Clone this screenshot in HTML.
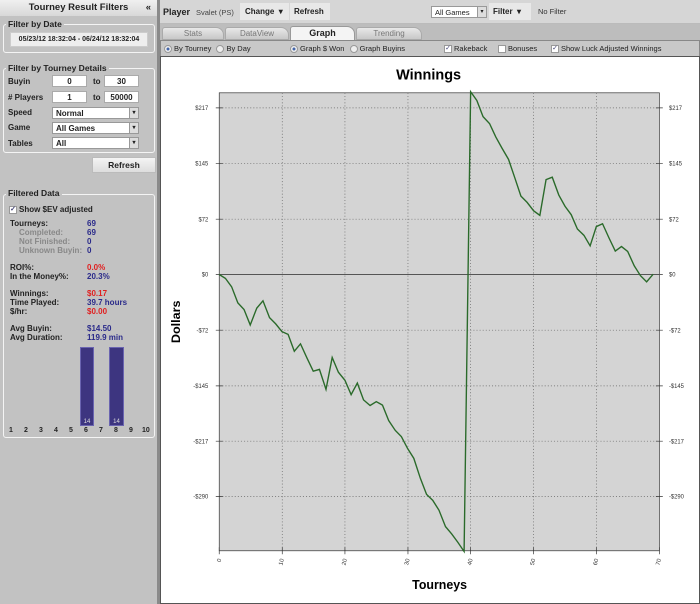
<!DOCTYPE html>
<html><head><style>
*{margin:0;padding:0;box-sizing:border-box}
body{width:700px;height:604px;background:#c4c4c4;font-family:"Liberation Sans",sans-serif;font-size:8px;position:relative;overflow:hidden;color:#222}
.a{position:absolute;white-space:nowrap}
.b{font-weight:bold}
.fs{position:absolute;border:1px solid #f4f4f4;border-radius:3px}
.inp{position:absolute;background:#fff;border:1px solid #aaa;height:12px;text-align:center;font-weight:bold;line-height:11px}
.sel{position:absolute;background:#fff;border:1px solid #999;height:12px;font-weight:bold;line-height:11px;padding-left:3px}
.sel i{position:absolute;right:0;top:0;width:9px;height:10px;background:#ddd;border-left:1px solid #999;font-style:normal;font-size:6px;text-align:center;line-height:10px}
.nv{color:#2a2a8a;font-weight:bold}
.rd{color:#e02020;font-weight:bold}
.gr{color:#888;font-weight:bold}
.cb{display:inline-block;width:8px;height:8px;border:1px solid #999;background:#fff;vertical-align:middle;margin-right:2px;font-size:7px;line-height:6px;color:#447;text-align:center}
.rb{display:inline-block;width:8px;height:8px;border:1px solid #999;border-radius:50%;background:#eee;vertical-align:middle;margin-right:2px}
.rb.on{background:radial-gradient(#4466aa 30%,#eee 40%)}
.n{position:absolute;top:427px;font-size:7px;font-weight:bold}
</style></head><body>
<div class="a" style="left:0;top:0;width:157px;height:604px;background:#c2c2c2"></div>
<div class="a" style="left:157px;top:0;width:3px;height:604px;background:#8a8a8a"></div>
<div class="a b" style="left:0;top:0;width:157px;height:16px;background:linear-gradient(#f0f0f0,#d8d8d8);font-size:9.5px;text-align:center;line-height:16px;color:#222">Tourney Result Filters<span style="position:absolute;right:6px">«</span></div>
<div class="fs" style="left:3px;top:24px;width:152px;height:29px"></div>
<div class="a b" style="left:6px;top:19px;font-size:8.5px;background:#c2c2c2;padding:0 2px">Filter by Date</div>
<div class="a b" style="left:10px;top:32px;width:138px;height:15px;background:#eee;border:1px solid #ccc;font-size:7px;text-align:center;line-height:14px">05/23/12 18:32:04 - 06/24/12 18:32:04</div>
<div class="fs" style="left:3px;top:68px;width:152px;height:85px"></div>
<div class="a b" style="left:6px;top:63px;font-size:8.5px;background:#c2c2c2;padding:0 2px">Filter by Tourney Details</div>
<div class="a b" style="left:8px;top:77px">Buyin</div>
<div class="inp" style="left:52px;top:75px;width:35px">0</div>
<div class="a b" style="left:93px;top:77px">to</div>
<div class="inp" style="left:104px;top:75px;width:35px">30</div>
<div class="a b" style="left:8px;top:93px"># Players</div>
<div class="inp" style="left:52px;top:91px;width:35px">1</div>
<div class="a b" style="left:93px;top:93px">to</div>
<div class="inp" style="left:104px;top:91px;width:35px">50000</div>
<div class="a b" style="left:8px;top:108px">Speed</div>
<div class="sel" style="left:52px;top:107px;width:87px">Normal<i>▾</i></div>
<div class="a b" style="left:8px;top:123px">Game</div>
<div class="sel" style="left:52px;top:122px;width:87px">All Games<i>▾</i></div>
<div class="a b" style="left:8px;top:139px">Tables</div>
<div class="sel" style="left:52px;top:137px;width:87px">All<i>▾</i></div>
<div class="a b" style="left:92px;top:157px;width:64px;height:16px;background:linear-gradient(#f4f4f4,#ddd);border:1px solid #bbb;text-align:center;line-height:15px;font-size:8.5px">Refresh</div>
<div class="fs" style="left:3px;top:194px;width:152px;height:244px"></div>
<div class="a b" style="left:6px;top:188px;font-size:8.5px;background:#c2c2c2;padding:0 2px">Filtered Data</div>
<div class="a b" style="left:9px;top:205px"><span class="cb">✓</span>Show $EV adjusted</div>
<div class="a b" style="left:10px;top:219px">Tourneys:</div><div class="a nv" style="left:87px;top:219px">69</div>
<div class="a gr" style="left:19px;top:228px">Completed:</div><div class="a nv" style="left:87px;top:228px">69</div>
<div class="a gr" style="left:19px;top:237px">Not Finished:</div><div class="a nv" style="left:87px;top:237px">0</div>
<div class="a gr" style="left:19px;top:246px">Unknown Buyin:</div><div class="a nv" style="left:87px;top:246px">0</div>
<div class="a b" style="left:10px;top:263px">ROI%:</div><div class="a rd" style="left:87px;top:263px">0.0%</div>
<div class="a b" style="left:10px;top:272px">In the Money%:</div><div class="a nv" style="left:87px;top:272px">20.3%</div>
<div class="a b" style="left:10px;top:289px">Winnings:</div><div class="a rd" style="left:87px;top:289px">$0.17</div>
<div class="a b" style="left:10px;top:298px">Time Played:</div><div class="a nv" style="left:87px;top:298px">39.7 hours</div>
<div class="a b" style="left:10px;top:307px">$/hr:</div><div class="a rd" style="left:87px;top:307px">$0.00</div>
<div class="a b" style="left:10px;top:324px">Avg Buyin:</div><div class="a nv" style="left:87px;top:324px">$14.50</div>
<div class="a b" style="left:10px;top:333px">Avg Duration:</div><div class="a nv" style="left:87px;top:333px">119.9 min</div>
<div class="a" style="left:80px;top:347px;width:14px;height:79px;background:#3d3580;border:1px solid #6a64b0;color:#ddd;font-size:6px;text-align:center;padding-top:71px">14</div>
<div class="a" style="left:109px;top:347px;width:15px;height:79px;background:#3d3580;border:1px solid #6a64b0;color:#ddd;font-size:6px;text-align:center;padding-top:71px">14</div>
<div class="n" style="left:9px">1</div><div class="n" style="left:24px">2</div><div class="n" style="left:39px">3</div><div class="n" style="left:54px">4</div><div class="n" style="left:69px">5</div><div class="n" style="left:84px">6</div><div class="n" style="left:99px">7</div><div class="n" style="left:114px">8</div><div class="n" style="left:129px">9</div><div class="n" style="left:142px">10</div>
<div class="a" style="left:160px;top:0;width:540px;height:24px;background:#d6d6d6;border-bottom:1px solid #bbb"></div>
<div class="a b" style="left:163px;top:7px;font-size:9px">Player</div>
<div class="a" style="left:196px;top:8px;font-size:7.5px;color:#444">Svalet (PS)</div>
<div class="a b" style="left:240px;top:3px;width:49px;height:17px;background:#e8e8e8;line-height:17px;padding-left:5px">Change &nbsp;▾</div>
<div class="a b" style="left:290px;top:3px;width:40px;height:17px;background:#e8e8e8;line-height:17px;padding-left:4px">Refresh</div>
<div class="sel" style="left:431px;top:6px;width:56px;font-weight:normal;font-size:7.5px">All Games<i>▾</i></div>
<div class="a b" style="left:489px;top:3px;width:42px;height:17px;background:#e8e8e8;line-height:17px;padding-left:4px">Filter &nbsp;▾</div>
<div class="a" style="left:538px;top:7px;font-size:7.5px;color:#333">No Filter</div>
<div class="a" style="left:160px;top:24px;width:540px;height:16px;background:#bdbdbd"></div>
<div class="a" style="left:162px;top:27px;width:62px;height:13px;background:linear-gradient(#e8e8e8,#c8c8c8);border:1px solid #aaa;border-radius:3px 8px 0 0;text-align:center;color:#777;font-size:8px;line-height:12px">Stats</div>
<div class="a" style="left:225px;top:27px;width:64px;height:13px;background:linear-gradient(#e8e8e8,#c8c8c8);border:1px solid #aaa;border-radius:3px 8px 0 0;text-align:center;color:#777;font-size:8px;line-height:12px">DataView</div>
<div class="a b" style="left:290px;top:26px;width:65px;height:15px;background:#f4f4f4;border:1px solid #999;border-bottom:none;border-radius:3px 8px 0 0;text-align:center;font-size:9px;line-height:13px">Graph</div>
<div class="a" style="left:356px;top:27px;width:66px;height:13px;background:linear-gradient(#e8e8e8,#c8c8c8);border:1px solid #aaa;border-radius:3px 8px 0 0;text-align:center;color:#777;font-size:8px;line-height:12px">Trending</div>
<div class="a" style="left:160px;top:40px;width:540px;height:17px;background:#c8c8c8;border:1px solid #888;border-bottom:none"></div>
<div class="a" style="left:164px;top:44px;font-size:7.5px"><span class="rb on"></span>By Tourney <span class="rb" style="margin-left:3px"></span>By Day</div>
<div class="a" style="left:290px;top:44px;font-size:7.5px"><span class="rb on"></span>Graph $ Won <span class="rb" style="margin-left:3px"></span>Graph Buyins</div>
<div class="a" style="left:444px;top:44px;font-size:7.5px"><span class="cb">✓</span>Rakeback</div>
<div class="a" style="left:498px;top:44px;font-size:7.5px"><span class="cb"></span>Bonuses</div>
<div class="a" style="left:551px;top:44px;font-size:7.5px"><span class="cb">✓</span>Show Luck Adjusted Winnings</div>
<div class="a" style="left:160px;top:56px;width:540px;height:548px;background:#fff;border:1px solid #555"></div>
<svg class="a" style="left:160px;top:55px" width="540" height="549" viewBox="0 0 1568 1568" preserveAspectRatio="none" font-family="Liberation Sans, sans-serif">
<text x="780" y="70" font-size="42" font-weight="bold" text-anchor="middle">Winnings</text>
<rect x="172" y="108" width="1278" height="1308" fill="#d4d4d4" stroke="#333" stroke-width="2"/>
<g stroke="#666" stroke-width="2" stroke-dasharray="3,6">
<line x1="172" y1="151" x2="1450" y2="151"/><line x1="172" y1="310" x2="1450" y2="310"/><line x1="172" y1="469" x2="1450" y2="469"/><line x1="172" y1="786" x2="1450" y2="786"/><line x1="172" y1="945" x2="1450" y2="945"/><line x1="172" y1="1103" x2="1450" y2="1103"/><line x1="172" y1="1261" x2="1450" y2="1261"/>
<line x1="355" y1="108" x2="355" y2="1416"/><line x1="537" y1="108" x2="537" y2="1416"/><line x1="720" y1="108" x2="720" y2="1416"/><line x1="902" y1="108" x2="902" y2="1416"/><line x1="1085" y1="108" x2="1085" y2="1416"/><line x1="1267" y1="108" x2="1267" y2="1416"/>
</g>
<g stroke="#333" stroke-width="2">
<path d="M162 151h20M162 310h20M162 469h20M162 627h20M162 786h20M162 945h20M162 1103h20M162 1261h20M1440 151h20M1440 310h20M1440 469h20M1440 627h20M1440 786h20M1440 945h20M1440 1103h20M1440 1261h20"/>
<path d="M172 1406v20M355 1406v20M537 1406v20M720 1406v20M902 1406v20M1085 1406v20M1267 1406v20M1450 1406v20"/>
</g>
<line x1="172" y1="627" x2="1450" y2="627" stroke="#555" stroke-width="3"/>
<g font-size="17" fill="#333">
<text x="140" y="157" text-anchor="end">$217</text><text x="140" y="316" text-anchor="end">$145</text><text x="140" y="475" text-anchor="end">$72</text><text x="140" y="633" text-anchor="end">$0</text><text x="140" y="792" text-anchor="end">-$72</text><text x="140" y="951" text-anchor="end">-$145</text><text x="140" y="1109" text-anchor="end">-$217</text><text x="140" y="1267" text-anchor="end">-$290</text>
<text x="1478" y="157">$217</text><text x="1478" y="316">$145</text><text x="1478" y="475">$72</text><text x="1478" y="633">$0</text><text x="1478" y="792">-$72</text><text x="1478" y="951">-$145</text><text x="1478" y="1109">-$217</text><text x="1478" y="1267">-$290</text>
<text transform="translate(178,1440) rotate(-75)" text-anchor="end">0</text>
<text transform="translate(360,1440) rotate(-75)" text-anchor="end">10</text>
<text transform="translate(543,1440) rotate(-75)" text-anchor="end">20</text>
<text transform="translate(725,1440) rotate(-75)" text-anchor="end">30</text>
<text transform="translate(908,1440) rotate(-75)" text-anchor="end">40</text>
<text transform="translate(1090,1440) rotate(-75)" text-anchor="end">50</text>
<text transform="translate(1273,1440) rotate(-75)" text-anchor="end">60</text>
<text transform="translate(1455,1440) rotate(-75)" text-anchor="end">70</text>
</g>
<text x="812" y="1525" font-size="36" font-weight="bold" text-anchor="middle">Tourneys</text>
<text transform="translate(58,762) rotate(-90)" font-size="36" font-weight="bold" text-anchor="middle">Dollars</text>
<polyline fill="none" stroke="#2a6a2a" stroke-width="4" points="172,627 190,638 208,662 226,708 244,727 262,771 281,723 299,702 318,750 336,768 354,790 372,798 390,846 408,825 427,866 445,903 463,898 482,955 500,864 518,906 537,929 555,970 573,937 591,985 610,1001 628,990 646,1000 664,1044 683,1072 701,1090 719,1124 737,1152 756,1209 774,1255 792,1272 810,1300 829,1347 847,1368 865,1392 883,1418 902,105 920,130 938,176 957,196 975,234 993,266 1012,298 1030,350 1048,403 1066,421 1085,445 1103,458 1121,356 1139,349 1158,400 1176,432 1194,456 1212,497 1231,515 1249,545 1267,490 1285,482 1304,523 1322,560 1340,547 1358,561 1377,602 1395,630 1413,648 1432,626"/>
</svg>
</body></html>
